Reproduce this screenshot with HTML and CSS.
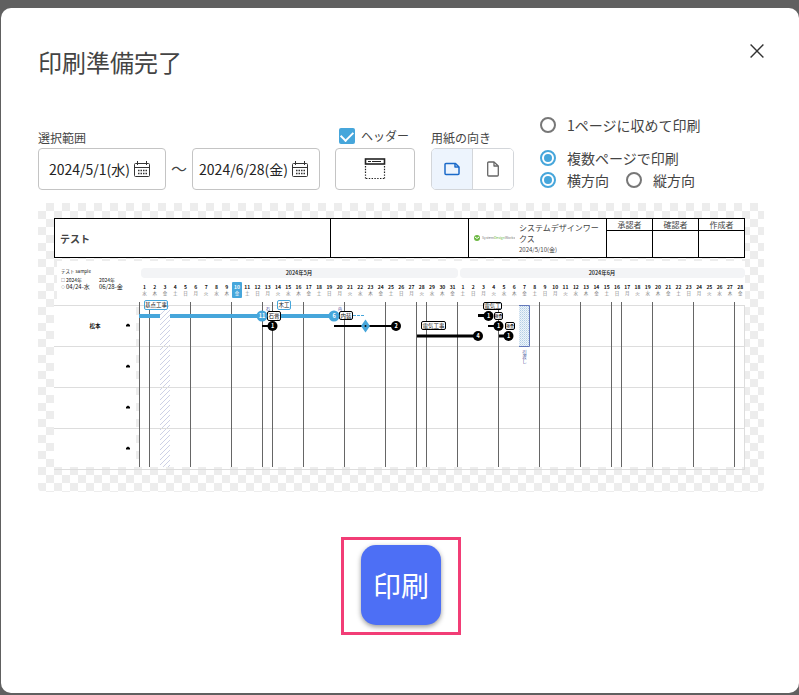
FILE: index.html
```html
<!DOCTYPE html>
<html lang="ja">
<head>
<meta charset="utf-8">
<meta name="viewport" content="width=device-width, initial-scale=1">
<title>印刷準備完了</title>
<link rel="stylesheet" href="styles.css">
</head>
<body>
<main class="dialog">
  <header class="dialog-header">
    <h1 class="title">印刷準備完了</h1>
    <button class="close" type="button" aria-label="閉じる">
      <svg width="14" height="14" viewBox="0 0 14 14" fill="none" stroke="#333" stroke-width="1.4"><path d="M.6.6l12.8 12.8M13.4.6.6 13.4"/></svg>
    </button>
  </header>

  <form class="options">
    <div class="range">
      <div class="field">
        <label class="label" for="from">選択範囲</label>
        <div class="box date">
          <input id="from" class="date-input" type="text" size="10" value="2024/5/1(水)">
          <svg class="cal" width="16" height="16" viewBox="0 0 16 16" fill="none" stroke="#333"><rect x=".5" y="2.5" width="15" height="13" rx="1"/><path d="M.5 6.5h15M3.5 0v4M12.5 0v4"/><path d="M4 9.500h9M4 12.500h9" stroke-width="1.500" stroke-dasharray="1.500 1"/></svg>
        </div>
      </div>
      <span class="tilde">〜</span>
      <div class="field">
        <div class="box date">
          <input class="date-input" type="text" size="10" value="2024/6/28(金)" aria-label="終了日">
          <svg class="cal" width="16" height="16" viewBox="0 0 16 16" fill="none" stroke="#333"><rect x=".5" y="2.5" width="15" height="13" rx="1"/><path d="M.5 6.5h15M3.5 0v4M12.5 0v4"/><path d="M4 9.500h9M4 12.500h9" stroke-width="1.500" stroke-dasharray="1.500 1"/></svg>
        </div>
      </div>
    </div>

    <div class="field header-field">
      <label class="check-label"><input class="check" type="checkbox" checked><span>ヘッダー</span></label>
      <button class="box" type="button" aria-label="ヘッダー設定">
        <svg width="22" height="22" viewBox="0 0 22 22" fill="none" stroke="#222"><rect x="1.500" y="1" width="19" height="5" stroke-width="1.600"/><path d="M4 3.500h3M8 3.500h9" stroke-width="1"/><path d="M1.500 8v13M20.500 8v13M2 20.500h18" stroke-width="1.200" stroke-dasharray="1.400 1.400"/></svg>
      </button>
    </div>

    <div class="field paper">
      <span class="label">用紙の向き</span>
      <div class="segments">
        <button class="segment active" type="button" aria-label="横">
          <svg width="16" height="14" viewBox="0 0 16 14" fill="none" stroke="#1b6ac9" stroke-width="1.500" stroke-linejoin="round"><path d="M2 1.500h9.500L15 5v6.500a1 1 0 0 1-1 1H2a1 1 0 0 1-1-1v-9a1 1 0 0 1 1-1z"/><path d="M11 1.500V5h4"/></svg>
        </button>
        <button class="segment" type="button" aria-label="縦">
          <svg width="12" height="16" viewBox="0 0 12 16" fill="none" stroke="#666" stroke-width="1.300" stroke-linejoin="round"><path d="M1.700 1h5.300L11.300 5v9a1 1 0 0 1-1 1H1.700a1 1 0 0 1-1-1V2a1 1 0 0 1 1-1z"/><path d="M7 1v4h4"/></svg>
        </button>
      </div>
    </div>

    <div class="radios">
      <label class="radio single"><input type="radio" name="mode">1ページに収めて印刷</label>
      <label class="radio"><input type="radio" name="mode" checked>複数ページで印刷</label>
      <div class="radio-row">
        <label class="radio"><input type="radio" name="direction" checked>横方向</label>
        <label class="radio"><input type="radio" name="direction">縦方向</label>
      </div>
    </div>
  </form>

  <section class="preview" aria-label="プレビュー">
    <table class="sheet-header">
      <colgroup><col class="c-title"><col class="c-blank"><col class="c-company"><col class="c-sign"><col class="c-sign"><col class="c-sign"></colgroup>
      <tbody>
        <tr class="sign-head">
          <td class="sheet-title" rowspan="2">テスト</td>
          <td rowspan="2"></td>
          <td rowspan="2">
            <div class="company">
              <svg class="logo" width="42" height="8" viewBox="0 0 42 8"><circle cx="4" cy="4" r="3" fill="#6cb843"/><path d="M2 3q2 3 4 0" stroke="#fff" fill="none"/><text x="9" y="5" font-size="3.500" fill="#777">System<tspan fill="#6cb843">Design</tspan>Works</text></svg>
              <div class="company-text">システムデザインワークス<small>2024/5/10(金)</small></div>
            </div>
          </td>
          <th>承認者</th><th>確認者</th><th>作成者</th>
        </tr>
        <tr class="sign-body"><td></td><td></td><td></td></tr>
      </tbody>
    </table>
    <svg id="chart" class="chart" viewBox="54 260 691 210" role="img" aria-label="工程表"></svg>
  </section>

  <div class="actions">
    <div class="highlight"><button class="print" type="button">印刷</button></div>
  </div>
</main>
<script src="script.js"></script>
</body>
</html>
```

FILE: styles.css
```css
* { box-sizing: border-box; }

body {
  margin: 0;
  padding: 8px 0 2px 1px;
  background: #606060;
  color: #444;
  font: 14px/20px "Noto Sans CJK JP", sans-serif;
}

button, input { font: inherit; color: inherit; }

.dialog {
  min-height: calc(100vh - 10px);
  padding: 36px 35px 40px 37px;
  background: #fff;
  border-radius: 10px;
}

.dialog-header {
  display: flex;
  justify-content: space-between;
  align-items: flex-start;
}

.title {
  margin: 0;
  font-size: 24px;
  line-height: 36px;
  font-weight: 400;
}

.close {
  display: flex;
  padding: 0;
  border: 0;
  background: none;
}

.options {
  display: flex;
  align-items: flex-end;
  margin-top: 35px;
}

.field { display: flex; flex-direction: column; }

.label { font-size: 12px; line-height: 20px; }

.range { display: flex; align-items: flex-end; }

.box {
  display: flex;
  align-items: center;
  justify-content: center;
  height: 42px;
  padding: 0;
  border: 1px solid #c4c4c4;
  border-radius: 4px;
  background: #fff;
}

.date {
  width: 128px;
  gap: 4px;
  padding-right: 5px;
  color: #222;
}

.date-input {
  field-sizing: content;
  min-width: 0;
  padding: 0;
  border: 0;
  outline: 0;
  background: none;
}

.cal { flex: none; }

.tilde {
  width: 26px;
  font-size: 16px;
  line-height: 40px;
  height: 42px;
  text-align: center;
}

.header-field { width: 80px; margin-left: 15px; }

.check-label {
  display: flex;
  align-items: center;
  gap: 6px;
  height: 24px;
  padding-left: 4px;
  font-size: 12px;
}

.check {
  appearance: none;
  flex: none;
  width: 16px;
  height: 16px;
  margin: 0;
  border-radius: 2px;
  background: #46a6db;
  display: grid;
  place-items: center;
}

.check:checked::before {
  content: "";
  width: 10px;
  height: 6px;
  border: solid #fff;
  border-width: 0 0 2px 2px;
  transform: translateY(-1px) rotate(-45deg);
}

.paper { width: 83px; margin-left: 16px; }

.segments {
  display: flex;
  height: 42px;
  border: 1px solid #d3d6da;
  border-radius: 5px;
  overflow: hidden;
}

.segment {
  flex: 1;
  display: flex;
  align-items: center;
  justify-content: center;
  padding: 0;
  border: 0;
  background: #fff;
}

.segment.active { background: #edf4fd; border-right: 1px solid #d3d6da; }

.radios {
  display: flex;
  flex-direction: column;
  gap: 2px;
  margin-left: 26px;
}

.radio { display: flex; align-items: center; gap: 11px; white-space: nowrap; }

.radio.single { margin-bottom: 11px; }

.radio-row { display: flex; gap: 17px; }

.radio input {
  appearance: none;
  flex: none;
  display: grid;
  place-items: center;
  width: 16px;
  height: 16px;
  margin: 0;
  border: 2px solid #777;
  border-radius: 50%;
  background: #fff;
}

.radio input:checked { border-color: #46a6db; }

.radio input:checked::before {
  content: "";
  width: 8px;
  height: 8px;
  border-radius: 50%;
  background: #46a6db;
}

.preview {
  margin-top: 13px;
  padding: 15px 19px 22px 16px;
  border-radius: 5px;
  background: repeating-conic-gradient(#ededed 0 25%, #fff 0 50%) 0 0 / 16px 16px;
}

.sheet-header {
  width: 100%;
  table-layout: fixed;
  border-collapse: collapse;
  background: #fff;
  font-size: 8px;
  line-height: 11px;
}

.sheet-header th, .sheet-header td {
  padding: 0;
  border: 1px solid #000;
  font-weight: 400;
}

.c-title { width: 40%; }
.c-blank, .c-company { width: 20%; }
.sign-head { height: 12px; }
.sign-body { height: 27px; }

.sheet-header .sheet-title {
  padding-left: 5px;
  font-size: 10px;
  font-weight: 700;
}

.company { display: flex; align-items: center; gap: 4px; padding: 0 4px; }
.logo { flex: none; }
.company-text small { display: block; font-size: 6px; }

.chart {
  display: block;
  width: 100%;
  margin-top: 2px;
  font-family: "Noto Sans CJK JP", sans-serif;
}

.actions { display: flex; justify-content: center; margin-top: 45px; }

.highlight { padding: 5px 17px 7px; border: 3px solid #f23d76; }

.print {
  display: block;
  width: 80px;
  height: 80px;
  padding: 0;
  border: 0;
  border-radius: 15px;
  background: #4d6ff5;
  box-shadow: 0 2px 5px rgba(0, 0, 0, .4);
  color: #fff;
  font-size: 28px;
  line-height: 40px;
}
```

FILE: script.js
```js
const NS = 'http://www.w3.org/2000/svg';
const chart = document.getElementById('chart');
const LEFT = 139.5;
const DAY = 10.26;
const BLUE = '#46a6db';

function add(name, attrs, text) {
  const node = document.createElementNS(NS, name);
  for (const key in attrs) node.setAttribute(key, attrs[key]);
  if (text !== undefined) node.textContent = text;
  chart.appendChild(node);
  return node;
}
const rect = (x, y, width, height, fill, more) => add('rect', { x, y, width, height, fill, ...more });
const line = (x1, y1, x2, y2, stroke, w, more) => add('line', { x1, y1, x2, y2, stroke, 'stroke-width': w || 1, ...more });
const text = (x, y, value, size, fill, more) => add('text', { x, y, 'font-size': size, fill: fill || '#111', ...more }, value);
const centered = { 'text-anchor': 'middle' };

add('defs', {}).innerHTML =
  '<pattern id="holiday" width="5" height="5" patternUnits="userSpaceOnUse"><path d="M-1 6L6-1M-1 1L1-1M4 6L6 4" stroke="#cdd1e6" stroke-width="1"/></pattern>' +
  '<pattern id="handover" width="2" height="2" patternUnits="userSpaceOnUse"><rect width="2" height="2" fill="#edf5fb"/><rect width="1" height="1" fill="#b4cee4"/><rect x="1" y="1" width="1" height="1" fill="#cfe0ef"/></pattern>';

// Background
rect(57, 261, 688, 44, '#fff');
rect(54, 302, 82, 165, '#fff');
rect(139, 302, 606, 165, '#fff');

// Months and days
rect(141, 268, 317, 10, '#f3f4f6', { rx: 4 });
rect(460, 268, 285, 10, '#f3f4f6', { rx: 4 });
text(299, 274.5, '2024年5月', 5.5, '#111', { ...centered, 'font-weight': 500 });
text(602, 274.5, '2024年6月', 5.5, '#111', { ...centered, 'font-weight': 500 });
rect(232, 282, 10, 16, BLUE, { rx: 1 });
const week = '水木金土日月火';
for (let i = 0; i < 59; i++) {
  const x = 144.5 + i * 10.27;
  const today = i === 9;
  text(x, 288.5, i < 31 ? i + 1 : i - 30, 5, today ? '#fff' : '#111', { ...centered, 'font-weight': 700 });
  text(x, 295, week[i % 7], 4.5, today ? '#fff' : '#777', centered);
}

// Labels at the left
text(61, 273, 'テスト sample', 4.5);
text(61, 281.5, '□', 4, '#555');
text(66, 281.5, '2024年', 5);
text(99, 281.5, '2024年', 5);
text(61, 288.5, '◇', 4, '#555');
text(66, 288.5, '04/24-水', 6);
text(99, 288.5, '06/28-金', 6);
text(95, 327.5, '松本', 5.5, '#111', { ...centered, 'font-weight': 700 });
for (let y = 325; y < 460; y += 41) add('path', { d: `M126 ${y + 1.5}v-1.500l2-1.500 2 1.500v1.500z`, fill: '#000' });

// Grid
rect(160, 306, 10, 161, 'url(#holiday)');
for (let y = 305.5; y < 470; y += 41) line(54, y, 745, y, '#ddd');
line(744.5, 305, 744.5, 470, '#ddd');
for (const day of [0, 1, 5, 9, 12, 13, 16, 20, 24, 27, 28, 31, 35, 39, 43, 46, 47, 50, 54, 58]) {
  const x = Math.floor(LEFT + day * DAY) + .5;
  line(x, 302, x, 467, '#666');
}

// Handover period
rect(519, 305, 11, 42, 'url(#handover)');
add('path', { d: 'M519 305.500h10.500v41H519', stroke: '#6579ba', fill: 'none' });
['引', '渡', 'し'].forEach((c, i) => text(524.5, 353.5 + i * 4.5, c, 4.5, '#3b4593', centered));

// Bars
line(139, 316, 160, 316, BLUE, 4);
line(170, 316, 334, 316, BLUE, 4);
line(262, 326, 272, 326, '#000', 2);
line(334, 326, 396, 326, '#000', 2);
line(353, 315.5, 364, 315.5, BLUE, 1, { 'stroke-dasharray': '3 1' });
line(417, 336, 478, 336, '#000', 3);
line(478, 315.5, 488, 315.5, '#000', 3);
line(488, 326, 498, 326, '#000', 2);
line(499, 336, 508, 336, '#000', 3);
add('path', { d: 'M365.500 319.500l4.500 6.500-4.500 6.500-4.500-6.500z', fill: BLUE });
add('circle', { cx: 365.5, cy: 326, r: 1, fill: '#111' });

function label(x, y, w, h, value, stroke) {
  rect(x + .5, y + .5, w - 1, h - 1, '#fff', { stroke: stroke || '#000', rx: 1.5 });
  text(x + w / 2, y + h / 2 + 2, value, 5.5, '#111', centered);
}
label(144, 300, 24, 10, '基点工事', BLUE);
label(277, 300, 14, 10, '木工', BLUE);
label(267, 311, 14, 10, '石膏');
label(339, 311, 14, 9, '内装');
label(421, 321, 25, 9, '電気工事');
label(483, 302, 19, 8, '電気工');
label(494, 312, 9, 8, '');
text(498.5, 317.5, '検査', 4, '#111', centered);
label(505, 322, 10, 8, '');
text(510, 327.5, '検査', 4, '#111', centered);
text(268, 311, '石', 4, '#3b4593', centered);
text(340, 311, '内', 4, '#3b4593', centered);

function node(cx, cy, value, fill) {
  add('circle', { cx, cy, r: fill ? 5.5 : 5, fill: fill || '#000' });
  text(cx, cy + 2, value, 5.5, '#fff', { ...centered, 'font-weight': 700 });
}
node(262, 316, '11', BLUE);
node(334, 316, '6', BLUE);
node(272.5, 326, '1');
node(396, 326, '2');
node(478, 336, '4');
node(488.5, 316, '1');
node(498.5, 326, '1');
node(508.5, 336, '1');
```
